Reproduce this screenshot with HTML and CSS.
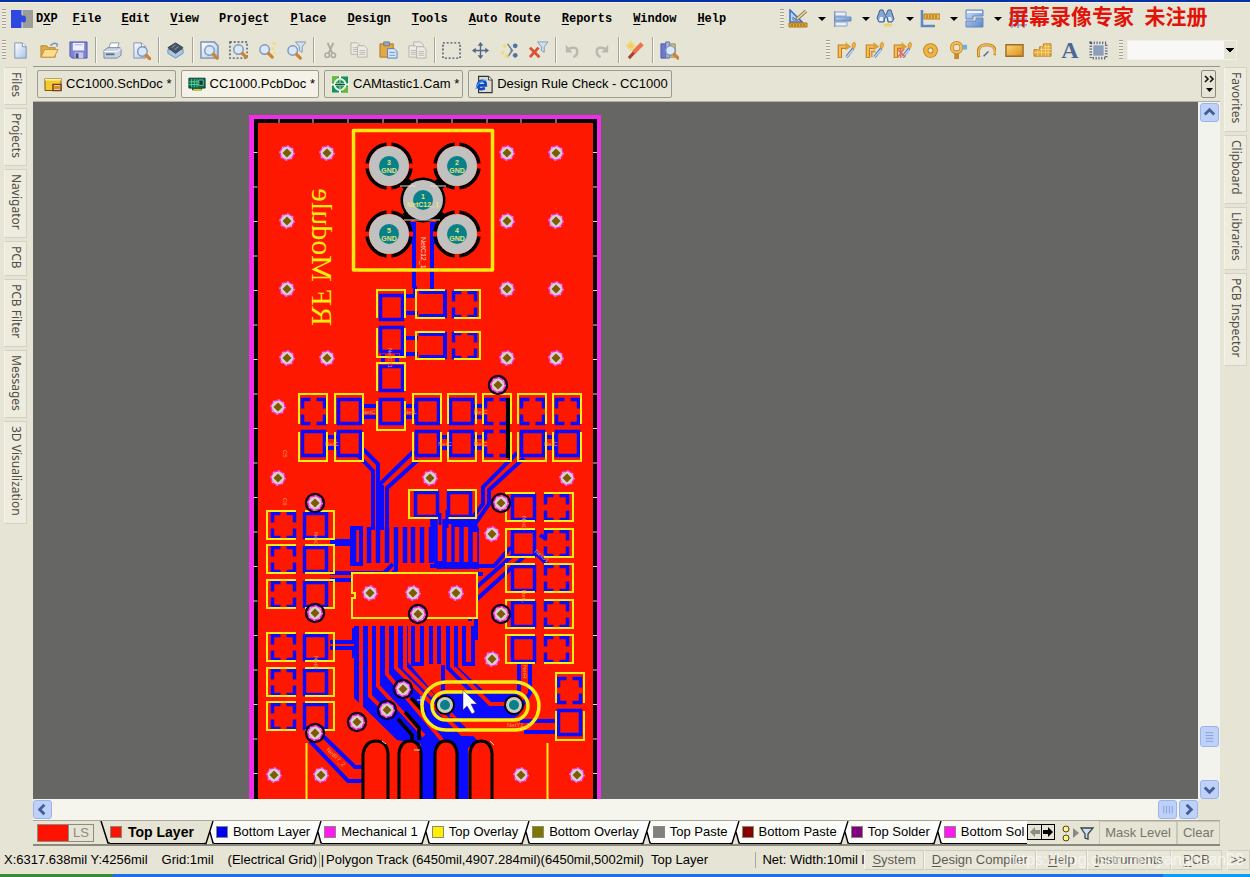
FILE: index.html
```html
<!DOCTYPE html>
<html lang="en">
<head>
<meta charset="utf-8">
<title>CC1000.PcbDoc</title>
<link rel="stylesheet" href="styles.css">
</head>
<body>
<svg class="defs" aria-hidden="true">
  <defs>
    <linearGradient id="gBlue" x1="0" y1="0" x2="1" y2="1"><stop offset="0" stop-color="#fff"/><stop offset="1" stop-color="#a9c3ea"/></linearGradient>
    <linearGradient id="gDeep" x1="0" y1="0" x2="1" y2="1"><stop offset="0" stop-color="#c8dcfa"/><stop offset="1" stop-color="#5b86cc"/></linearGradient>
    <linearGradient id="gGold" x1="0" y1="0" x2="1" y2="1"><stop offset="0" stop-color="#fbd774"/><stop offset="1" stop-color="#d98c1c"/></linearGradient>
    <g id="lens"><circle cx="9" cy="9" r="5" fill="#d6e8fb" stroke="#8296b4" stroke-width="1.5"/><path d="M13 13l4 4" stroke="#c98534" stroke-width="3.4" stroke-linecap="round"/></g>
    <g id="funnel"><path d="M0 0h11l-4 5v6l-3-2V5z" fill="#cfe0f4" stroke="#7f97b8"/></g>
    <g id="page"><path d="M0 0h8l4 4v12H0z" fill="url(#gBlue)" stroke="#7d93b0"/><path d="M8 0v4h4" fill="#fff" stroke="#7d93b0"/></g>
    <g id="greypage"><path d="M0 0h7l3 3v9H0z" fill="#eceae2" stroke="#b3b2ab"/><path d="M2 5h6M2 7h6M2 9h6" stroke="#b9b8b1"/></g>
    <g id="route"><path d="M3 18V6h8" fill="none" stroke="#c57f1b" stroke-width="4.6"/><path d="M3 17V6h8" fill="none" stroke="#f3bd5a" stroke-width="2.4"/><path d="M9 1l6 5-6 4z" fill="#e0a038"/><path d="M18 1q3 2 0 7l-2-1q-1-4 2-6z" fill="#edb24a" stroke="#c58525" stroke-width=".7"/><path d="M17 8l-7 9" stroke="#4f78b8" stroke-width="3"/><path d="M17 9l-7 8" stroke="#cfe2fb" stroke-width="1.4"/></g>
  </defs>
</svg>
<div class="title-edge"></div>

<header class="menubar">
  <span class="grip"></span>
  <svg class="logo" viewBox="0 0 22 20" aria-hidden="true"><path d="M0 1h12v5q-3 4 0 8v5H0z" fill="#2b41dc"/><path d="M11 1h11v18H11z" fill="#9c9d98"/><path d="M0 1h11v6q4-2 4 3t-4 3v6H0z" fill="#2f49e0"/><path d="M11 13v6M11 1v5" stroke="#dce0f4"/></svg>
  <nav class="menus">
    <a href="#">D<u>X</u>P</a><a href="#"><u>F</u>ile</a><a href="#"><u>E</u>dit</a><a href="#"><u>V</u>iew</a><a href="#">Proje<u>c</u>t</a><a href="#"><u>P</u>lace</a><a href="#"><u>D</u>esign</a><a href="#"><u>T</u>ools</a><a href="#"><u>A</u>uto Route</a><a href="#"><u>R</u>eports</a><a href="#"><u>W</u>indow</a><a href="#"><u>H</u>elp</a>
  </nav>
  <div class="utility">
    <span class="grip"></span>
    <button class="drop" aria-label="Utilities"><svg viewBox="0 0 20 20"><path d="M2 1v12h12z" fill="#bcd4f6" stroke="#3f73c8" stroke-width="1.6"/><path d="M5 8v3h3z" fill="#fff" stroke="#3f73c8"/><path d="M18 2L8 11" stroke="#8d7a55" stroke-width="3.4"/><path d="M18 2L9 10" stroke="#eadba9" stroke-width="1.6"/><path d="M1 14h18v4H1z" fill="#e5a832" stroke="#a8741b"/><path d="M4 15v2M7 15v2M10 15v2M13 15v2M16 15v2" stroke="#8a5c10"/></svg><i></i></button>
    <button class="drop" aria-label="Align"><svg viewBox="0 0 20 20"><path d="M2.500 2v16" stroke="#7e93b4"/><path d="M3 3h11v4H3zM3 13h12v4H3z" fill="#eaf1fc" stroke="#8aa0c2"/><path d="M3 8h16v4H3z" fill="url(#gDeep)" stroke="#6c8bc0"/></svg><i></i></button>
    <button class="drop" aria-label="Find"><svg viewBox="0 0 20 20"><path d="M4 1h3l2 5h1l2-5h3l3 9-2 3h-4l-1-5H9l-1 5H3L1 9z" fill="#88a6d4" stroke="#3d5f97"/><path d="M4 8h3v4H3zM12 8h3l1 4h-3z" fill="#e7f0fd"/><path d="M8 15l2 2 2-2 2 2 2-2" fill="none" stroke="#e9d56c" stroke-width="2"/></svg><i></i></button>
    <button class="drop" aria-label="Dimensions"><svg viewBox="0 0 20 20"><path d="M2 1v16h13" fill="none" stroke="#5f86c6" stroke-width="2.600"/><path d="M4 5h16v5H4z" fill="#edb94d" stroke="#b27b1d"/><path d="M7 6v3M10 6v3M13 6v3M16 6v3" stroke="#936414"/><path d="M14 15l3 3 3-3" fill="#f5e7a0"/></svg><i></i></button>
    <button class="drop" aria-label="Rooms"><svg viewBox="0 0 20 20"><path d="M2 1h17v6H9v3H2zM2 12h10V9h7v9H2z" fill="url(#gDeep)" stroke="#6788bd"/><path d="M3 3h15" stroke="#eef5ff" stroke-width="2"/></svg><i></i></button>
    <button class="drop grid" aria-label="Grid"><svg viewBox="0 0 20 20"><path d="M4 1v18M10 1v18M16 1v18M1 4h18M1 10h18M1 16h18" stroke="#7a96d0" stroke-width="1.600"/></svg></button>
    <strong class="recorder" lang="zh">屏幕录像专家&ensp;未注册</strong>
  </div>
</header>

<div class="toolbar">
  <div class="tools">
    <span class="grip"></span>
    <button aria-label="New"><svg viewBox="0 0 20 20"><use href="#page" x="4" y="2"/></svg></button>
    <button aria-label="Open"><svg viewBox="0 0 20 20"><path d="M1 17V5h6l2 2h7v10z" fill="#e0a949" stroke="#b98632"/><path d="M1 17l4-8h14l-4 8z" fill="#fbdf8e" stroke="#c2923b"/><path d="M11 5q3-4 7-2v3" fill="none" stroke="#7592bd" stroke-width="1.500"/></svg></button>
    <button aria-label="Save"><svg viewBox="0 0 20 20"><path d="M1 1h18v17H3l-2-2z" fill="#7c83d8" stroke="#5459ac"/><path d="M4 2h12v8H4z" fill="#eef1fd"/><path d="M6 12h9v6H6z" fill="#c9cbe0"/><path d="M7 13h3v5H7z" fill="#46498c"/><path d="M6 4h8" stroke="#a7aee4"/></svg></button>
    <span class="sep"></span>
    <button aria-label="Print"><svg viewBox="0 0 20 20"><path d="M6 8l2-6h9l-2 6z" fill="#fff" stroke="#8c9aad"/><path d="M1 10l4-3h13l1 2v6l-4 3H1z" fill="#c7d3e3" stroke="#7588a2"/><path d="M1 11h14l4-3" fill="none" stroke="#fff"/><path d="M3 14h9" stroke="#5b6c84" stroke-width="2"/></svg></button>
    <button aria-label="Preview"><svg viewBox="0 0 20 20"><use href="#page" x="2" y="2"/><use href="#lens" x="2" y="2"/></svg></button>
    <span class="sep"></span>
    <button aria-label="Components"><svg viewBox="0 0 20 20"><path d="M2 9v4l8 5 8-5V9z" fill="#a9c6e4" stroke="#7291b4"/><path d="M2 7l8-5 8 5-8 6z" fill="#475464" stroke="#303a47"/><path d="M6 7l4-3M9 9l4-3" stroke="#93a3b6"/></svg></button>
    <span class="sep"></span>
    <button aria-label="Fit document"><svg viewBox="0 0 20 20"><path d="M1 1h14l4 4v13H1z" fill="url(#gBlue)" stroke="#7b90ad" stroke-width="1.500"/><use href="#lens" x="1" y="1"/></svg></button>
    <button aria-label="Fit area"><svg viewBox="0 0 20 20"><path d="M1 1h18v17H1z" fill="none" stroke="#46546a" stroke-width="1.500" stroke-dasharray="2 2"/><use href="#lens" x="1" y="0"/></svg></button>
    <button aria-label="Zoom selected"><svg viewBox="0 0 20 20"><use href="#lens" x="-2" y="0"/><path d="M15 2l2-1 2 2-2 2zM13 8l2-2 2 2-2 2zM16 12l2-1 1 2-2 2z" fill="#f4dd76"/></svg></button>
    <button aria-label="Zoom filtered"><svg viewBox="0 0 20 20"><use href="#lens" x="-3" y="1"/><use href="#funnel" x="9" y="1"/></svg></button>
    <span class="sep"></span>
    <button aria-label="Cut"><svg viewBox="0 0 20 20"><path d="M7 2l5 11M13 2L8 13" stroke="#acaaa3" stroke-width="2"/><circle cx="6.500" cy="15" r="2.300" fill="none" stroke="#acaaa3" stroke-width="1.600"/><circle cx="13" cy="15" r="2.300" fill="none" stroke="#acaaa3" stroke-width="1.600"/></svg></button>
    <button aria-label="Copy"><svg viewBox="0 0 20 20"><use href="#greypage" x="1" y="2"/><use href="#greypage" x="8" y="5"/></svg></button>
    <button aria-label="Paste"><svg viewBox="0 0 20 20"><path d="M1 3h14v14H1z" fill="#e6a93f" stroke="#a9762a"/><path d="M5 1h6v4H5z" fill="#9ba7b8" stroke="#6e7a8c"/><path d="M9 8h7l3 3v7H9z" fill="#d5e5fb" stroke="#5a7eb4"/><path d="M11 12h6M11 15h6" stroke="#6f90c0"/></svg></button>
    <button aria-label="Paste array"><svg viewBox="0 0 20 20"><use href="#greypage" x="6" y="1"/><use href="#greypage" x="1" y="5"/><use href="#greypage" x="9" y="6"/></svg></button>
    <span class="sep"></span>
    <button aria-label="Select"><svg viewBox="0 0 20 20"><path d="M1 2h18v16H1z" fill="none" stroke="#34506e" stroke-width="1.500" stroke-dasharray="2 2"/></svg></button>
    <button aria-label="Move"><svg viewBox="0 0 20 20"><path d="M10 3v14M3 10h14" stroke="#50688a" stroke-width="1.500"/><path d="M10 1l3 4H7zM10 19l3-4H7zM1 10l4-3v6zM19 10l-4-3v6z" fill="#50688a"/></svg></button>
    <button aria-label="Deselect"><svg viewBox="0 0 20 20"><path d="M8 3l5 7-5 7M13 10h-2" fill="none" stroke="#6c7c92" stroke-width="1.500"/><circle cx="16" cy="5" r="2.500" fill="#4d75a8"/><circle cx="16" cy="15" r="2.500" fill="#4d75a8"/><circle cx="5" cy="5" r="2" fill="#f1dc7c"/><circle cx="3" cy="12" r="2" fill="#f1dc7c"/><circle cx="7" cy="16" r="2" fill="#f1dc7c"/></svg></button>
    <button aria-label="Clear filter"><svg viewBox="0 0 20 20"><use href="#funnel" x="9" y="1"/><path d="M1 7l10 10M10 7L1 17" stroke="#dc5234" stroke-width="3"/></svg></button>
    <span class="sep"></span>
    <button aria-label="Undo"><svg viewBox="0 0 20 20"><path d="M6 8q9-3 9 3 0 4-4 6" fill="none" stroke="#bab8b0" stroke-width="2.600"/><path d="M3 4v8h7z" fill="#bab8b0"/></svg></button>
    <button aria-label="Redo"><svg viewBox="0 0 20 20"><path d="M14 8q-9-3-9 3 0 4 4 6" fill="none" stroke="#bab8b0" stroke-width="2.600"/><path d="M17 4v8h-7z" fill="#bab8b0"/></svg></button>
    <span class="sep"></span>
    <button aria-label="Wizard"><svg viewBox="0 0 20 20"><path d="M16 4L3 18" stroke="#a8432b" stroke-width="3.200"/><path d="M17 3L8 12" stroke="#ef7146" stroke-width="4.500"/><path d="M5 0v10M0 5h10M2 2l6 6M8 2L2 8" stroke="#f4cf50" stroke-width="1.400"/></svg></button>
    <span class="sep"></span>
    <button aria-label="Browse"><svg viewBox="0 0 20 20"><path d="M1 3h5v15H1z" fill="#7079d2" stroke="#50589f"/><path d="M6 1h4v17H6z" fill="#a3b0ea" stroke="#5f6cae"/><path d="M10 3h6v14h-6z" fill="#dfc37c" stroke="#9c884c"/><use href="#lens" x="2" y="1"/></svg></button>
  </div>
  <div class="placement">
    <span class="grip"></span>
    <button aria-label="Route"><svg viewBox="0 0 20 20"><use href="#route"/></svg></button>
    <button aria-label="Multi route"><svg viewBox="0 0 20 20"><use href="#route"/><path d="M7 17v-6h4" fill="none" stroke="#d9982f" stroke-width="2"/></svg></button>
    <button aria-label="Differential route"><svg viewBox="0 0 20 20"><use href="#route"/><path d="M5 9l8 8M12 8l-7 9M8 7v11" stroke="#ea6b54" stroke-width="1.600"/></svg></button>
    <button aria-label="Pad"><svg viewBox="0 0 20 20"><circle cx="10" cy="10" r="5" fill="none" stroke="#b9780f" stroke-width="5.500"/><circle cx="10" cy="10" r="5" fill="none" stroke="#f0b544" stroke-width="3.800"/></svg></button>
    <button aria-label="Via"><svg viewBox="0 0 20 20"><path d="M8 10v9" stroke="#c98c2b" stroke-width="5"/><circle cx="8" cy="7" r="5" fill="none" stroke="#c0831e" stroke-width="4"/><circle cx="8" cy="7" r="5" fill="none" stroke="#f2be58" stroke-width="2.400"/><path d="M14 4h5v5h-5z" fill="#6db0d8"/></svg></button>
    <button aria-label="Arc"><svg viewBox="0 0 20 20"><path d="M2 17Q-1 4 10 4t9 11" fill="none" stroke="#c08020" stroke-width="3.200"/><path d="M2 16Q0 4 10 4t9 10" fill="none" stroke="#f0bb57" stroke-width="1.600"/><path d="M7 16l5-5" stroke="#4d6f9e" stroke-width="1.600"/></svg></button>
    <button aria-label="Fill"><svg viewBox="0 0 20 20"><path d="M1 4h18v12H1z" fill="url(#gGold)" stroke="#9e6d2d" stroke-width="1.500"/></svg></button>
    <button aria-label="Polygon"><svg viewBox="0 0 20 20"><path d="M1 16v-7h6V6h4V3h8v13z" fill="#e6ab3c" stroke="#c38422"/><path d="M1 12h18M7 9h12M11 6h8M5 9v7M9 6v10M13 3v13M16 3v13" stroke="#f8dc92" stroke-width=".8"/></svg></button>
    <button class="letter" aria-label="String">A</button>
    <button aria-label="Component"><svg viewBox="0 0 20 20"><path d="M2 2h16v16H2z" fill="none" stroke="#3c4a5e" stroke-width="3" stroke-dasharray="1 2"/><path d="M4 4h12v12H4z" fill="#8e9db8" stroke="#e8ecf4"/></svg></button>
    <span class="grip"></span>
    <select aria-label="Net"><option></option></select>
  </div>
</div>

<main class="workspace">
  <aside class="dock"><button>Files</button><button>Projects</button><button>Navigator</button><button>PCB</button><button>PCB Filter</button><button>Messages</button><button>3D Visualization</button></aside>

  <section class="editor">
    <div class="doctabs">
      <button><svg viewBox="0 0 18 18"><path d="M1 3h16v12H1z" fill="#f6c92c" stroke="#7a5a14"/><path d="M1 3h16v2H1z" fill="#fff0a0"/><path d="M9 9h8v6H9z" fill="#fff" stroke="#7a3d10" stroke-width="1.500"/><path d="M10 12h6" stroke="#e08f19" stroke-width="3"/></svg>CC1000.SchDoc *</button>
      <button class="current"><svg viewBox="0 0 20 18"><path d="M1 2h18v11h-4v2H5v-2H1z" fill="#0d6b4c" stroke="#07382c"/><path d="M4 3v9M7 3v9M10 3v9M1 6h11M1 9h11" stroke="#58d09c"/><path d="M12 4h5v6h-5z" fill="#173c33" stroke="#6cc99c"/><path d="M6 15h9" stroke="#e3bf34" stroke-width="2"/></svg>CC1000.PcbDoc *</button>
      <button><svg viewBox="0 0 18 18"><path d="M1 1h16v16H1z" fill="#14925a"/><path d="M1 1h6v6H1zM11 11h6v6h-6z" fill="#68bb38"/><circle cx="9" cy="9" r="5.500" fill="none" stroke="#e6f7ea" stroke-width="2"/><path d="M9 0v18M0 9h18" stroke="#f4fbf2" stroke-width="2"/><path d="M9 4v10M4 9h10" stroke="#124f46"/></svg>CAMtastic1.Cam *</button>
      <button><svg viewBox="0 0 20 20"><path d="M4 1h11l4 4v14H4z" fill="#dcdcd2" stroke="#333" stroke-width="1.300"/><path d="M15 1v4h4" fill="#fff" stroke="#333"/><path d="M3 11h9q0-5-4-5t-5 5q1 5 5 4l3-1" fill="none" stroke="#1248c4" stroke-width="3"/><path d="M1 15Q3 6 13 5" fill="none" stroke="#49a3ee" stroke-width="1.300"/></svg>Design Rule Check - CC1000</button>
      <button class="more" aria-label="More documents"><svg viewBox="0 0 12 22"><path d="M2 3l3 3-3 3M7 3l3 3-3 3" fill="none" stroke="#111" stroke-width="1.600"/><path d="M3 15h7l-3.500 4z"/></svg></button>
    </div>

    <div class="view">
      <div class="canvas">
        <svg class="board" viewBox="249 115 352 684" role="img" aria-label="PCB layout">
          <defs>
            <g id="via"><circle r="7.500" fill="#ee2be6"/><circle r="7" fill="none" stroke="#ff8ad8" stroke-width="1.500" stroke-dasharray="1.500 4"/><circle r="6.200" fill="#d6cfca"/><path d="M0-4.500L4.500 0 0 4.500-4.500 0z" fill="#7d5a05"/></g>
            <g id="viab"><circle r="9" fill="none" stroke="#10002c" stroke-width="2.400"/><use href="#via"/></g>
            <g id="big"><circle r="22" fill="none" stroke="#000" stroke-width="3.500"/><path d="M0-24v5M0 24v-5M-24 0h5M24 0h-5" stroke="#ff1800" stroke-width="5"/><circle r="20" fill="#c1c1c0"/><circle r="10" fill="#078087"/></g>
            <g id="solid"><path d="M1.500 1.500h22v24h-22z" fill="#ff1800" stroke="#0b0bff" stroke-width="3.500"/></g>
            <g id="therm"><path d="M1.500 1.500h22v24h-22z" fill="#ff1800" stroke="#0b0bff" stroke-width="3.500"/><path d="M12.500-1v30M-1 13.500h28" stroke="#ff1800" stroke-width="6"/></g>
            <g id="vbox" fill="none" stroke="#ffec12" stroke-width="2"><path d="M0 30V0h28v30M0 38v29h28V38"/></g>
            <g id="hbox" fill="none" stroke="#ffec12" stroke-width="2"><path d="M29 0H0v28h29M38 0h29v28H38"/></g>
            <g id="hl"><use href="#therm" x="4" y="1"/><use href="#solid" x="36" y="1"/><use href="#hbox"/></g>
            <g id="hr"><use href="#solid" x="5" y="1"/><use href="#therm" x="38" y="1"/><use href="#hbox"/></g>
          </defs>
          <path d="M249 115h352v684H249z" fill="#f02ce6"/>
          <path d="M254 119h343v680H254z" fill="#000"/>
          <path d="M258 123h335v676H258z" fill="#ff1800"/>
          <g stroke="#d8d8d8">
            <path d="M279 119v4M313 119v4M348 119v4M383 119v4M417 119v4M452 119v4M487 119v4M521 119v4M556 119v4"/>
            <path d="M255.500 152v640" stroke-width="4" stroke-dasharray="1 33.500"/>
            <path d="M595 152v640" stroke-width="4" stroke-dasharray="1 33.500"/>
          </g>

          <!-- antenna connector -->
          <path d="M404 182l10 8M442 182l-10 8M406 218l10-8M441 218l-10-8" stroke="#000" stroke-width="11"/>
          <path d="M414 222v66M432 222v72" stroke="#0b0bff" stroke-width="4" fill="none"/>
          <path d="M410 222v22M436 222v22" stroke="#0b0bff" stroke-width="4" fill="none"/>
          <use href="#big" x="389" y="166"/><use href="#big" x="457" y="166"/><use href="#big" x="389" y="234"/><use href="#big" x="457" y="234"/>
          <circle cx="423" cy="200" r="22.500"/><circle cx="423" cy="200" r="20" fill="#c1c1c0"/><circle cx="423" cy="200" r="10" fill="#078087"/>
          <path d="M353.500 130.500h139v139.500h-139z" fill="none" stroke="#ffe90f" stroke-width="3.500" stroke-linejoin="round"/>
          <g class="padtext"><text x="389" y="165">3</text><text x="389" y="173">GND</text><text x="457" y="165">2</text><text x="457" y="173">GND</text><text x="389" y="233">5</text><text x="389" y="241">GND</text><text x="457" y="233">4</text><text x="457" y="241">GND</text><text x="423" y="199">1</text><text x="423" y="207">NetC12_1</text></g>
          <text class="net" transform="translate(421 237) rotate(90)">NetC12_1</text>
          <text class="silk" transform="matrix(0 -1 -1 0 312 326)">RF Module</text>

          <!-- routed gaps -->
          <g fill="none" stroke="#0b0bff" stroke-width="4">
            <path d="M403 296h12l0-10M400 313h18M400 338h18M400 354h18M383 354v10M397 354v10"/>
            <path d="M364 406h14M364 417h14M405 406h10M405 417h10M474 406h12M474 417h12M325 437h12M325 448h12M440 437h10M440 448h10M474 437h12M474 448h12M545 437h12M545 448h12"/>
            <path d="M356 453l17 18v59M363 449l15 15v66M414 451l-34 33v46M418 460l-31 28v42M517 453l-34 34v17l-14 18M524 458l-35 32v14l-14 20"/>
            <path d="M330 541h22v-13h9v36h-9v-20h-22M330 573h54l9-9M330 580h56l10-10v-42"/>
            <path d="M430 566h64l15-17 18-5M433 574h50M470 621v-28l50-44M476 640v-40l52-47M527 544l22 22M540 535l28 18"/>
            <path d="M330 642h24v-14M330 648h24v10"/>
          </g>
          <path d="M376 485h8v45h-8zM430 519h45l4 10v40h-42l-5-10z" fill="#0b0bff"/>
          <path d="M354 527v38M369 527v36M378 527v36M387 527v36M396 527v36M405 527v36M413 527v36M422 527v36M431 527v36" stroke="#0b0bff" stroke-width="4.500"/>
          <path d="M440 518v43M449 524v38M457 527v35M466 527v35M475 532v30" stroke="#ff1800" stroke-width="4.500"/>

          <!-- lower bus -->
          <path d="M354 626h54v36l38 46 32 32-10 8v51h-47v-55l-24-4-43-42z" fill="#0b0bff"/>
          <g fill="none" stroke="#ff1800" stroke-width="4">
            <path d="M361 626v82l38 38M370 626v70l16 16M378 626v60l46 50M387 626v48l55 66M396 626v42l66 66h12l10 10M405 626v42l28 28"/>
            <path d="M450 715l40 8h36"/>
          </g>
          <path d="M440 700q2-8 12-8h56q14 0 14 13t-14 14h-50z" fill="#0b0bff"/>
          <path d="M412 626v35h58v-35z" fill="#ff1800"/>
          <path d="M413 626v38h9v-38M431 626v38M439 626v38M448 626v42l36 36h16M456 626v42l26 24M464 626v38h9v-38" fill="none" stroke="#0b0bff" stroke-width="4"/>
          <path d="M454 668l36 36h15" fill="none" stroke="#ff1800" stroke-width="4"/>
          <path d="M443 665v32M519 663v28M530 663v30l-10 16M520 721h38M524 732h33M320 733l35 34h12M310 741l38 40h16" fill="none" stroke="#0b0bff" stroke-width="4"/>
          <path d="M405 712l14 16v12M411 698l14 15M398 719l14 16v8" fill="none" stroke="#000" stroke-width="3.500"/>

          <!-- edge fingers -->
          <g fill="#ff1800" stroke="#000" stroke-width="3">
            <path d="M363 802v-48q2-13 13-13t12 13v48zM399 802v-48q1-13 11-13t11 13v48zM435 802v-48q1-13 11-13t11 13v48zM470 802v-48q1-13 11-13t11 13v48z"/>
          </g>

          <!-- upper passives -->
          <use href="#solid" x="379" y="294"/><use href="#solid" x="379" y="326"/><use href="#solid" x="379" y="365"/><use href="#solid" x="379" y="398"/>
          <g fill="none" stroke="#ffec12" stroke-width="2"><path d="M377 318v-28h28v28M377 328v29h28v-29M377 391v-28h28v28M377 401v29h28v-29"/></g>
          <path d="M419 292h26v24h-26M419 334h26v23h-26" fill="none" stroke="#0b0bff" stroke-width="4"/>
          <use href="#therm" x="452" y="291"/><use href="#therm" x="452" y="332"/>
          <g fill="none" stroke="#ffec12" stroke-width="2"><path d="M445 290h-29v28h29M454 290h26v28h-26M445 332h-29v27h29M454 332h26v27h-26"/></g>

          <use href="#therm" x="301" y="398"/><use href="#solid" x="301" y="430"/>
          <use href="#solid" x="337" y="398"/><use href="#solid" x="337" y="430"/>
          <use href="#solid" x="415" y="398"/><use href="#solid" x="415" y="430"/>
          <use href="#solid" x="449" y="398"/><use href="#solid" x="449" y="430"/>
          <use href="#therm" x="484" y="398"/><use href="#therm" x="484" y="430"/>
          <use href="#therm" x="520" y="398"/><use href="#solid" x="520" y="430"/>
          <use href="#therm" x="555" y="398"/><use href="#solid" x="555" y="430"/>
          <path d="M508 398v60" stroke="#000" stroke-width="4"/>
          <use href="#vbox" x="299" y="394"/><use href="#vbox" x="335" y="394"/><use href="#vbox" x="413" y="394"/><use href="#vbox" x="448" y="394"/><use href="#vbox" x="483" y="394"/><use href="#vbox" x="518" y="394"/><use href="#vbox" x="553" y="394"/>

          <!-- side passives -->
          <use href="#hl" x="267" y="511"/><use href="#hl" x="267" y="545"/><use href="#hl" x="267" y="580"/>
          <use href="#hl" x="267" y="633"/><use href="#hl" x="267" y="668"/><use href="#hl" x="267" y="702"/>
          <use href="#hr" x="506" y="493"/><use href="#hr" x="506" y="529"/><use href="#hr" x="506" y="564"/><use href="#hr" x="506" y="600"/><use href="#hr" x="506" y="635"/>
          <use href="#solid" x="414" y="491"/><use href="#solid" x="447" y="491"/><use href="#hbox" x="409" y="490"/>
          <path d="M440 513v12M447 510v18" stroke="#0b0bff" stroke-width="3"/>
          <use href="#therm" x="557" y="677"/><use href="#solid" x="557" y="709"/><use href="#vbox" x="556" y="673"/>

          <path d="M352 573h125v45H352v-20h3v-5h-3z" fill="#ff1800" stroke="#ffec12" stroke-width="2"/>
          <path d="M306.500 743v56M547.500 743v56" stroke="#ffec12" stroke-width="2"/>

          <!-- crystal -->
          <circle cx="445" cy="705" r="10"/><circle cx="514" cy="705" r="10"/>
          <circle cx="445" cy="705" r="8" fill="#c9c9c8"/><circle cx="514" cy="705" r="8" fill="#c9c9c8"/>
          <circle cx="445" cy="705" r="5" fill="#078087"/><circle cx="514" cy="705" r="5" fill="#078087"/>
          <g fill="none" stroke="#ffec12" stroke-width="3.500"><rect x="422" y="682" width="117" height="48" rx="24"/><rect x="432" y="692" width="96" height="28" rx="14"/></g>

          <g fill="none" stroke="#e8d8d0"><path d="M400 186h16M430 186h16M404 220h36M414 750h6M382 741l4 3M490 741l4 4M417 700h6M421 696v9"/></g>
          <g class="nets"><text x="362" y="414">NetC</text><text x="404" y="414">NetL</text><text x="474" y="414">NetC</text><text x="325" y="446">NetC</text><text x="438" y="446">NetC</text><text x="474" y="446">NetC</text><text x="544" y="446">NetC</text><text x="507" y="727">NetY1_2</text><text transform="translate(388 348) rotate(90)">NetC11</text><text transform="translate(523 665) rotate(90)">NetR</text><text transform="translate(326 750) rotate(45)">NetR7_2</text><text transform="translate(534 552) rotate(40)">NetU1</text><text transform="translate(283 450) rotate(90)">C5</text><text transform="translate(283 498) rotate(90)">C6</text><text transform="translate(314 532) rotate(90)">NetC</text><text transform="translate(522 516) rotate(90)">NetC</text><text transform="translate(522 590) rotate(90)">NetL</text><text transform="translate(314 656) rotate(90)">NetR</text></g>

          <use href="#via" x="287" y="153"/><use href="#via" x="327" y="153"/><use href="#via" x="507" y="153"/><use href="#via" x="556" y="153"/>
          <use href="#via" x="287" y="221"/><use href="#via" x="507" y="221"/><use href="#via" x="556" y="221"/>
          <use href="#via" x="287" y="289"/><use href="#via" x="507" y="289"/><use href="#via" x="556" y="289"/>
          <use href="#via" x="287" y="358"/><use href="#via" x="327" y="358"/><use href="#via" x="507" y="358"/><use href="#via" x="556" y="358"/>
          <use href="#viab" x="498" y="385"/><use href="#via" x="278" y="407"/><use href="#via" x="278" y="478"/><use href="#via" x="430" y="478"/><use href="#via" x="567" y="478"/>
          <use href="#viab" x="315" y="503"/><use href="#viab" x="501" y="503"/><use href="#via" x="492" y="534"/>
          <use href="#via" x="370" y="593"/><use href="#via" x="413" y="593"/><use href="#via" x="456" y="593"/>
          <use href="#viab" x="418" y="614"/><use href="#viab" x="315" y="613"/><use href="#viab" x="501" y="614"/><use href="#via" x="492" y="659"/>
          <use href="#viab" x="403" y="689"/><use href="#viab" x="387" y="710"/><use href="#viab" x="357" y="722"/><use href="#viab" x="315" y="733"/>
          <use href="#via" x="274" y="775"/><use href="#via" x="321" y="775"/><use href="#via" x="521" y="775"/><use href="#via" x="577" y="775"/>
          <path d="M463 690v20l4-4 5 8 3-2-4-8h6z" fill="#fff" stroke="#333" stroke-width=".5"/>
        </svg>
      </div>
      <div class="vscroll">
        <button aria-label="Scroll up"><svg viewBox="0 0 18 18"><path d="M4 11l5-5 5 5" fill="none" stroke="#3f5f96" stroke-width="3"/></svg></button>
        <span class="thumb"><svg viewBox="0 0 18 18"><path d="M5 5h8M5 8h8M5 11h8M5 14h8" stroke="#7d9fe0"/></svg></span>
        <button aria-label="Scroll down"><svg viewBox="0 0 18 18"><path d="M4 7l5 5 5-5" fill="none" stroke="#3f5f96" stroke-width="3"/></svg></button>
      </div>
    </div>

    <div class="hscroll">
      <button aria-label="Scroll left"><svg viewBox="0 0 18 18"><path d="M11 4L6 9l5 5" fill="none" stroke="#3f5f96" stroke-width="3"/></svg></button>
      <span class="thumb"><svg viewBox="0 0 18 18"><path d="M5 5v8M8 5v8M11 5v8M14 5v8" stroke="#7d9fe0"/></svg></span>
      <button aria-label="Scroll right"><svg viewBox="0 0 18 18"><path d="M7 4l5 5-5 5" fill="none" stroke="#3f5f96" stroke-width="3"/></svg></button>
    </div>

    <div class="layers">
      <button class="layerset"><span></span>LS</button>
      <svg class="slant first" viewBox="0 0 10 24"><path d="M1 0l7 22h2" fill="none" stroke="#000" stroke-width="1.500"/></svg>
      <div class="strip">
        <button class="active"><i class="red"></i>Top Layer</button>
        <svg class="slant" viewBox="0 0 10 24"><path d="M6 12L10 22V0H8z" fill="#fff"/><path d="M0 22.500h2L9 0M6 11l3 11h1" fill="none" stroke="#000" stroke-width="1.400"/></svg>
        <button><i class="blue"></i>Bottom Layer</button>
        <svg class="slant" viewBox="0 0 10 24"><path d="M0 0h10v22L5 12 2 22H0z" fill="#fff"/><path d="M0 22.500h2L9 0M6 11l3 11h1" fill="none" stroke="#000" stroke-width="1.400"/></svg>
        <button><i class="magenta"></i>Mechanical 1</button>
        <svg class="slant" viewBox="0 0 10 24"><path d="M0 0h10v22L5 12 2 22H0z" fill="#fff"/><path d="M0 22.500h2L9 0M6 11l3 11h1" fill="none" stroke="#000" stroke-width="1.400"/></svg>
        <button><i class="yellow"></i>Top Overlay</button>
        <svg class="slant" viewBox="0 0 10 24"><path d="M0 0h10v22L5 12 2 22H0z" fill="#fff"/><path d="M0 22.500h2L9 0M6 11l3 11h1" fill="none" stroke="#000" stroke-width="1.400"/></svg>
        <button><i class="olive"></i>Bottom Overlay</button>
        <svg class="slant" viewBox="0 0 10 24"><path d="M0 0h10v22L5 12 2 22H0z" fill="#fff"/><path d="M0 22.500h2L9 0M6 11l3 11h1" fill="none" stroke="#000" stroke-width="1.400"/></svg>
        <button><i class="grey"></i>Top Paste</button>
        <svg class="slant" viewBox="0 0 10 24"><path d="M0 0h10v22L5 12 2 22H0z" fill="#fff"/><path d="M0 22.500h2L9 0M6 11l3 11h1" fill="none" stroke="#000" stroke-width="1.400"/></svg>
        <button><i class="maroon"></i>Bottom Paste</button>
        <svg class="slant" viewBox="0 0 10 24"><path d="M0 0h10v22L5 12 2 22H0z" fill="#fff"/><path d="M0 22.500h2L9 0M6 11l3 11h1" fill="none" stroke="#000" stroke-width="1.400"/></svg>
        <button><i class="purple"></i>Top Solder</button>
        <svg class="slant" viewBox="0 0 10 24"><path d="M0 0h10v22L5 12 2 22H0z" fill="#fff"/><path d="M0 22.500h2L9 0M6 11l3 11h1" fill="none" stroke="#000" stroke-width="1.400"/></svg>
        <button><i class="magenta"></i>Bottom Sol</button>
      </div>
      <div class="pager"><button aria-label="Previous layers" disabled><svg viewBox="0 0 12 14"><path d="M1 7l5-5v3h5v4H6v3z" fill="#8d8d86"/></svg></button><button aria-label="Next layers"><svg viewBox="0 0 12 14"><path d="M11 7L6 2v3H1v4h5v3z"/></svg></button></div>
      <button class="mask" aria-label="Filter"><svg viewBox="0 0 34 20"><circle cx="5" cy="6" r="3" fill="#fff38a" stroke="#46421c"/><circle cx="5" cy="15" r="3" fill="#fff38a" stroke="#46421c"/><path d="M12 5l6 5-6 5z" fill="#8a8a84"/><path d="M20 5h12l-5 6v5l-3-1v-4z" fill="#cfe0ee" stroke="#39434c" stroke-width="1.300"/></svg></button>
      <button class="flat">Mask Level</button>
      <button class="flat">Clear</button>
    </div>
  </section>

  <aside class="dock right"><button>Favorites</button><button>Clipboard</button><button>Libraries</button><button>PCB Inspector</button></aside>
</main>

<footer class="status">
  <div class="coords"><span>X:6317.638mil Y:4256mil</span><span>Grid:1mil</span><span>(Electrical Grid) |</span></div>
  <div class="object">Polygon Track (6450mil,4907.284mil)(6450mil,5002mil)&nbsp; Top Layer</div>
  <div class="netinfo">Net: Width:10mil l</div>
  <nav class="panels"><button><u>S</u>ystem</button><button><u>D</u>esign Compiler</button><button><u>H</u>elp</button><button><u>I</u>nstruments</button><button><u>P</u>CB</button><button class="end">&gt;&gt;</button></nav>
  <span class="watermark">https://blog.csdn.net/yanghuan29</span>
</footer>
<div class="taskbar"><span></span><b></b></div>
</body>
</html>
```

FILE: styles.css
```css
* { box-sizing: border-box; }

body {
  margin: 0;
  height: 100vh;
  display: flex;
  flex-direction: column;
  overflow: hidden;
  background: #e6e4d5;
  color: #000;
  font: 13px/16px "Liberation Sans", Arial, sans-serif;
}

button {
  margin: 0;
  padding: 0;
  border: 0;
  background: none;
  color: inherit;
  font: inherit;
  white-space: nowrap;
}

svg { display: block; flex: none; }
.defs { position: absolute; width: 0; height: 0; }

.title-edge { flex: none; height: 3px; background: #0831a8; border-bottom: 1px solid #f2f1e6; }

.grip {
  flex: none;
  width: 4px;
  height: 20px;
  background: repeating-linear-gradient(#a3a195 0 1px, #efede0 1px 3px);
}

/* menu row */
.menubar { flex: none; height: 31px; display: flex; align-items: center; padding-left: 2px; }
.logo { width: 22px; height: 20px; margin-left: 5px; }
.menus { display: flex; margin-left: 3px; font: bold 12px/16px "Liberation Mono", "Courier New", monospace; gap: 20px; }
.menus a { color: #000; text-decoration: none; white-space: nowrap; }
.menus a:first-child { margin-right: -5px; }
.menus a:nth-child(n+6) { margin-left: 1px; }
u { text-underline-offset: 2px; }

.utility { position: relative; display: flex; align-items: center; margin-left: auto; width: 470px; }
.drop { width: 44px; display: flex; align-items: center; gap: 10px; padding-left: 4px; }
.drop svg { width: 20px; height: 20px; }
.drop i { border: 4px solid transparent; border-top-color: #000; border-bottom: 0; }
.recorder {
  position: absolute;
  left: 228px;
  top: -8px;
  color: #e01408;
  font: bold 21px/28px "Noto Sans CJK SC", sans-serif;
  white-space: nowrap;
}

/* tool row */
.toolbar { flex: none; height: 32px; display: flex; align-items: center; justify-content: space-between; padding: 0 13px 0 2px; }
.tools, .placement { display: flex; align-items: center; }
.tools button { width: 29px; height: 26px; display: grid; place-items: center; }
.placement button { width: 28px; height: 26px; display: grid; place-items: center; }
.tools svg, .placement svg { width: 19px; height: 19px; }
.tools .sep { width: 5px; height: 26px; background: linear-gradient(90deg, transparent 2px, #a7a597 2px 3px, #f8f7ee 3px 4px, transparent 4px); }
.placement .letter { color: #4a6898; font: bold 24px/24px "Liberation Serif", serif; }
.placement .grip:first-child { margin-right: 2px; }
.placement .grip { margin-left: 7px; }
.placement select {
  width: 110px;
  height: 20px;
  margin-left: 4px;
  border: 1px solid #f1f0e8;
  border-radius: 0;
  appearance: none;
  background: linear-gradient(45deg, transparent 50%, #000 50%) 98px 7px / 4px 4px no-repeat, linear-gradient(-45deg, transparent 50%, #000 50%) 102px 7px / 4px 4px no-repeat, linear-gradient(90deg, #f8f8f6 96px, #e6e4d5 96px);
}

/* workspace */
.workspace { flex: 1; min-height: 0; display: flex; }
.dock { flex: none; width: 33px; padding: 1px 6px 0 4px; display: flex; flex-direction: column; gap: 3px; }
.dock.right { width: 30px; padding: 1px 3px 0 4px; }
.dock button {
  writing-mode: vertical-rl;
  width: 23px;
  padding: 4px 0 7px;
  border: 1px solid #d4d2c3;
  border-left-color: #f6f4e9;
  background: #eeecdf;
  color: #4f4d45;
  font: 12px/20px "Noto Sans", "Open Sans", sans-serif;
}
.dock.right button { padding-bottom: 8px; }

.editor { flex: 1; min-width: 0; display: flex; flex-direction: column; }
.doctabs {
  flex: none;
  height: 36px;
  display: flex;
  align-items: center;
  gap: 5px;
  padding: 0 4px;
  border-top: 1px solid #98968a;
  border-bottom: 1px solid #b3b1a4;
}
.doctabs button {
  height: 28px;
  display: flex;
  align-items: center;
  gap: 4px;
  padding: 0 3px 0 6px;
  border: 1px solid #9d9b8e;
  border-radius: 2px;
}
.doctabs svg { width: 18px; height: 19px; }
.doctabs .current { background: #f4f2e6; }
.doctabs .more { margin-left: auto; margin-right: 0; width: 15px; padding: 0; justify-content: center; border-color: #8c8a7e; }
.doctabs .more svg { width: 12px; height: 22px; }

.view { flex: 1; min-height: 0; display: flex; }
.canvas { flex: 1; min-width: 0; padding: 13px 0 0 216px; overflow: hidden; background: #666664; }
.board { width: 352px; height: 684px; }
.padtext { fill: #e9e27c; font: bold 7px "Liberation Sans", Arial, sans-serif; text-anchor: middle; }
.net { fill: #f4d8cc; font: 7px "Liberation Sans", Arial, sans-serif; }
.nets { fill: #f39a68; font: 6px "Liberation Sans", Arial, sans-serif; }
.silk { fill: #ffec12; font: 30px "Liberation Serif", "Times New Roman", serif; }

.vscroll { flex: none; width: 22px; display: flex; flex-direction: column; align-items: center; padding: 1px 0 0; background: #f3f3ee; }
.vscroll button, .hscroll button, .thumb {
  width: 19px;
  height: 19px;
  display: grid;
  place-items: center;
  border: 1px solid #9bb5e8;
  border-radius: 3px;
  background: #bfd1f8;
}
.vscroll svg, .hscroll svg { width: 17px; height: 17px; }
.vscroll .thumb { margin-top: auto; margin-bottom: 33px; height: 21px; }
.hscroll { flex: none; height: 21px; display: flex; align-items: center; margin-right: 22px; background: #f5f5ee; }
.hscroll .thumb { margin-left: auto; margin-right: 2px; }

/* layer tabs */
.layers { flex: none; height: 26px; display: flex; align-items: flex-start; padding-left: 4px; border-top: 1px solid #a9a798; border-bottom: 2px solid #8c8a7e; }
.layerset { display: flex; width: 57px; height: 18px; margin: 3px 6px 0 0; border: 1px solid #8d8b7e; color: #8d8b7e; }
.layerset span { width: 31px; height: 16px; margin-right: 4px; background: #ff1200; border-right: 1px solid #8d8b7e; }
.strip { flex: 1; min-width: 0; display: flex; overflow: hidden; }
.slant { width: 10px; height: 24px; }
.strip button {
  flex: none;
  height: 23px;
  display: flex;
  align-items: center;
  gap: 5px;
  padding: 0 2px;
  border-bottom: 1px solid #000;
  background: #fbfbf8;
}
.strip button:last-child { flex: 1 0 auto; }
.strip .active { gap: 6px; background: none; font: bold 14px/16px "Liberation Sans", Arial, sans-serif; padding: 0 10px 0 0; }
.strip i { width: 12px; height: 12px; border: 1px solid #8a8878; }
.red { background: #ff1200; }
.blue { background: #0000fa; }
.magenta { background: #ff18f4; }
.yellow { background: #ffee00; }
.olive { background: #7d7600; }
.grey { background: #808080; }
.maroon { background: #8a0000; }
.purple { background: #830083; }

.pager { flex: none; display: flex; height: 16px; margin: 3px 2px 0 0; border: 1px solid #000; }
.pager button { width: 13px; display: grid; place-items: center; background: #e6e4d5; }
.pager button + button { border-left: 1px solid #000; }
.pager svg { width: 12px; height: 14px; }
.mask { flex: none; width: 42px; height: 23px; display: grid; place-items: center; }
.mask svg { width: 34px; height: 20px; }
.flat { flex: none; height: 23px; padding: 0 5px; border: 1px solid #c9c7b7; border-bottom: 0; color: #77756a; }

/* status row */
.status { position: relative; flex: none; height: 28px; display: flex; align-items: center; background: #e6e4d5; white-space: nowrap; }
.coords { width: 320px; display: flex; gap: 14px; padding-left: 4px; border-right: 1px solid #aaa899; }
.object { flex: 1; padding-left: 6px; border-right: 1px solid #aaa899; }
.netinfo { width: 108px; padding-left: 6px; overflow: hidden; }
.panels { display: flex; color: #5e5c52; }
.panels button { min-width: 51px; height: 20px; padding: 0 7px; border: 1px solid #cfcdbd; border-left-color: #f6f5ec; background: #e9e7d9; }
.panels .end { min-width: 0; margin-left: 5px; padding: 0 3px; }
.watermark { position: absolute; right: 6px; color: rgba(255, 255, 255, 0.6); font: 16px/20px "Liberation Sans", Arial, sans-serif; pointer-events: none; }

.taskbar { flex: none; height: 3px; display: flex; background: #1f6fe4; justify-content: space-between; }
.taskbar span { width: 9%; background: #3a8a35; }
.taskbar b { width: 7%; background: #109cf0; }
```
